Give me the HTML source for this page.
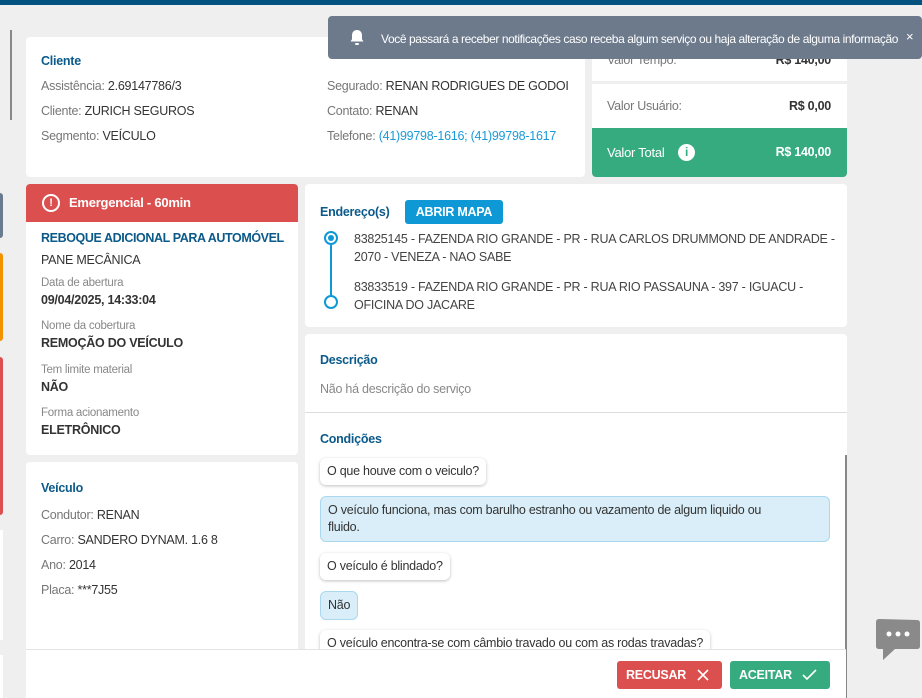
<!DOCTYPE html>
<html><head><meta charset="utf-8"><style>
*{box-sizing:border-box;margin:0;padding:0}
body{width:922px;height:698px;overflow:hidden;background:#efefef;font-family:"Liberation Sans",sans-serif;font-size:12.5px;color:#333;position:relative;letter-spacing:-0.25px}
.a{position:absolute}
.card{position:absolute;background:#fff;border-radius:4px}
.h{color:#0b5a8a;font-weight:bold;font-size:12.5px}
.l{color:#777}
.lbl{color:#888;font-size:11.5px}
.v{font-weight:bold;color:#333}
.bub{position:absolute;left:320px;background:#fff;border-radius:6px;box-shadow:0 1px 3px rgba(0,0,0,.25);padding:5px 7px;line-height:17px}
.ans{background:#d9eef8;border:1px solid #a9d8ef;box-shadow:none}
</style></head><body>
<div class="a" style="left:0;top:0;width:922px;height:5px;background:#03527f"></div>
<div class="a" style="left:10px;top:30px;width:2px;height:90px;background:#888"></div>
<div class="a" style="left:0;top:193px;width:3px;height:45px;background:#6b7b8f;border-radius:0 3px 3px 0"></div>
<div class="a" style="left:0;top:253px;width:3px;height:88px;background:#f39200;border-radius:0 3px 3px 0"></div>
<div class="a" style="left:0;top:357px;width:3px;height:158px;background:#db4f4f;border-radius:0 3px 3px 0"></div>
<div class="a" style="left:0;top:530px;width:3px;height:110px;background:#fff"></div>
<div class="a" style="left:0;top:655px;width:3px;height:43px;background:#fff"></div>

<div class="card" style="left:26px;top:37px;width:559px;height:140px">
<div class="a h" style="left:15px;top:17px">Cliente</div>
<div class="a" style="left:15px;top:42px"><span class="l">Assistência:</span> 2.69147786/3</div>
<div class="a" style="left:15px;top:67px"><span class="l">Cliente:</span> ZURICH SEGUROS</div>
<div class="a" style="left:15px;top:92px"><span class="l">Segmento:</span> VEÍCULO</div>
<div class="a" style="left:301px;top:42px"><span class="l">Segurado:</span> RENAN RODRIGUES DE GODOI</div>
<div class="a" style="left:301px;top:67px"><span class="l">Contato:</span> RENAN</div>
<div class="a" style="left:301px;top:92px;white-space:nowrap"><span class="l">Telefone:</span> <span style="color:#1a9ad6">(41)99798-1616; (41)99798-1617</span></div>
</div>

<div class="card" style="left:592px;top:37px;width:255px;height:140px;overflow:hidden">
<div class="a l" style="left:15px;top:16px">Valor Tempo:</div><div class="a v" style="right:16px;top:16px">R$ 140,00</div>
<div class="a" style="left:0;top:44px;width:255px;height:3px;background:#efefef"></div>
<div class="a l" style="left:15px;top:62px">Valor Usuário:</div><div class="a v" style="right:16px;top:62px">R$ 0,00</div>
<div class="a" style="left:0;top:91px;width:255px;height:49px;background:#36ab80;color:#fff">
<div class="a" style="left:15px;top:17px;font-size:13px">Valor Total</div>
<div class="a" style="left:86px;top:16px;width:17px;height:17px;border-radius:50%;background:#fff;color:#36ab80;font-weight:bold;font-size:12px;text-align:center;line-height:17px">i</div>
<div class="a" style="right:16px;top:17px;font-weight:bold">R$ 140,00</div></div>
</div>

<div class="a" style="left:328px;top:16px;width:594px;height:43px;background:#6c7a8c;border-radius:4px;color:#fff;font-size:12px">
<svg class="a" style="left:21px;top:13px" width="16" height="17" viewBox="0 0 16 17"><path d="M8 1c-3 0-5 2.3-5 5.3v4L1.5 12.5h13L13 10.3v-4C13 3.3 11 1 8 1z" fill="#fff"/><rect x="6" y="14" width="4" height="2" rx="1" fill="#fff"/></svg>
<div class="a" style="left:53px;top:16px;white-space:nowrap;letter-spacing:-0.4px">Você passará a receber notificações caso receba algum serviço ou haja alteração de alguma informação</div>
<div class="a" style="left:578px;top:13px;font-size:13px">×</div>
</div>

<div class="card" style="left:26px;top:184px;width:272px;height:271px;overflow:hidden">
<div class="a" style="left:0;top:0;width:272px;height:38px;background:#db4f4f;color:#fff">
<div class="a" style="left:16px;top:10px;width:18px;height:18px;border:2px solid #fff;border-radius:50%;text-align:center;font-size:11px;line-height:14px;font-weight:bold">!</div>
<div class="a" style="left:43px;top:11px;font-weight:bold;font-size:13px">Emergencial - 60min</div></div>
<div class="a h" style="left:15px;top:47px;white-space:nowrap;letter-spacing:-0.4px">REBOQUE ADICIONAL PARA AUTOMÓVEL</div>
<div class="a" style="left:15px;top:69px">PANE MECÂNICA</div>
<div class="a lbl" style="left:15px;top:93px">Data de abertura</div><div class="a v" style="left:15px;top:109px">09/04/2025, 14:33:04</div>
<div class="a lbl" style="left:15px;top:136px">Nome da cobertura</div><div class="a v" style="left:15px;top:152px">REMOÇÃO DO VEÍCULO</div>
<div class="a lbl" style="left:15px;top:180px">Tem limite material</div><div class="a v" style="left:15px;top:196px">NÃO</div>
<div class="a lbl" style="left:15px;top:223px">Forma acionamento</div><div class="a v" style="left:15px;top:239px">ELETRÔNICO</div>
</div>

<div class="card" style="left:26px;top:462px;width:272px;height:236px">
<div class="a h" style="left:15px;top:19px">Veículo</div>
<div class="a" style="left:15px;top:46px"><span class="l">Condutor:</span> RENAN</div>
<div class="a" style="left:15px;top:71px"><span class="l">Carro:</span> SANDERO DYNAM. 1.6 8</div>
<div class="a" style="left:15px;top:96px"><span class="l">Ano:</span> 2014</div>
<div class="a" style="left:15px;top:121px"><span class="l">Placa:</span> ***7J55</div>
</div>

<div class="card" style="left:305px;top:184px;width:542px;height:143px">
<div class="a h" style="left:15px;top:21px">Endereço(s)</div>
<div class="a" style="left:100px;top:16px;width:98px;height:24px;background:#0e99d6;border-radius:3px;color:#fff;font-weight:bold;text-align:center;line-height:24px">ABRIR MAPA</div>
<div class="a" style="left:19px;top:47px;width:14px;height:14px;border:2px solid #0e99d6;border-radius:50%"><div style="margin:2px;width:6px;height:6px;border-radius:50%;background:#0e99d6"></div></div>
<div class="a" style="left:25px;top:61px;width:2px;height:51px;background:#0e99d6"></div>
<div class="a" style="left:19px;top:111px;width:14px;height:14px;border:2px solid #0e99d6;border-radius:50%;background:#fff"></div>
<div class="a" style="left:49px;top:46px;white-space:nowrap;line-height:18px;color:#444">83825145 - FAZENDA RIO GRANDE - PR - RUA CARLOS DRUMMOND DE ANDRADE -<br>2070 - VENEZA - NAO SABE</div>
<div class="a" style="left:49px;top:94px;white-space:nowrap;line-height:18px;color:#444">83833519 - FAZENDA RIO GRANDE - PR - RUA RIO PASSAUNA - 397 - IGUACU -<br>OFICINA DO JACARE</div>
</div>

<div class="card" style="left:305px;top:334px;width:542px;height:364px;border-radius:4px 4px 0 0">
<div class="a h" style="left:15px;top:19px">Descrição</div>
<div class="a" style="left:15px;top:48px;color:#888">Não há descrição do serviço</div>
<div class="a" style="left:0;top:78px;width:542px;height:1px;background:#ddd"></div>
<div class="a h" style="left:15px;top:98px">Condições</div>
</div>
<div class="a" style="left:845px;top:455px;width:2px;height:243px;background:#888"></div>
<div class="bub" style="top:458px">O que houve com o veiculo?</div>
<div class="bub ans" style="top:496px;width:510px;padding-right:50px">O veículo funciona, mas com barulho estranho ou vazamento de algum liquido ou fluido.</div>
<div class="bub" style="top:553px">O veículo é blindado?</div>
<div class="bub ans" style="top:591px">Não</div>
<div class="bub" style="top:630px">O veículo encontra-se com câmbio travado ou com as rodas travadas?</div>

<div class="a" style="left:26px;top:649px;width:820px;height:49px;background:#fff;border-top:1px solid #e3e3e3"></div>
<div class="a" style="left:617px;top:661px;width:105px;height:28px;background:#db4f4f;border-radius:3px;color:#fff;font-weight:bold;line-height:28px;padding-left:9px">RECUSAR<svg class="a" style="left:80px;top:8px" width="12" height="12"><path d="M1 1L11 11M11 1L1 11" stroke="#fff" stroke-width="1.6"/></svg></div>
<div class="a" style="left:730px;top:661px;width:100px;height:28px;background:#36ab80;border-radius:3px;color:#fff;font-weight:bold;line-height:28px;padding-left:9px">ACEITAR<svg class="a" style="left:72px;top:8px" width="15" height="12"><path d="M1 6L5 10L14 1" stroke="#fff" stroke-width="1.6" fill="none"/></svg></div>

<svg class="a" style="left:875px;top:618px" width="46" height="44" viewBox="0 0 46 44"><path d="M4 1L42 2Q45 2 45 5V28Q45 31 42 31H20L8 42V31H4Q1 31 1 28V4Q1 1 4 1Z" fill="#8a8a8a"/><circle cx="14" cy="16" r="2.5" fill="#fff"/><circle cx="23" cy="16" r="2.5" fill="#fff"/><circle cx="32" cy="16" r="2.5" fill="#fff"/></svg>
</body></html>
